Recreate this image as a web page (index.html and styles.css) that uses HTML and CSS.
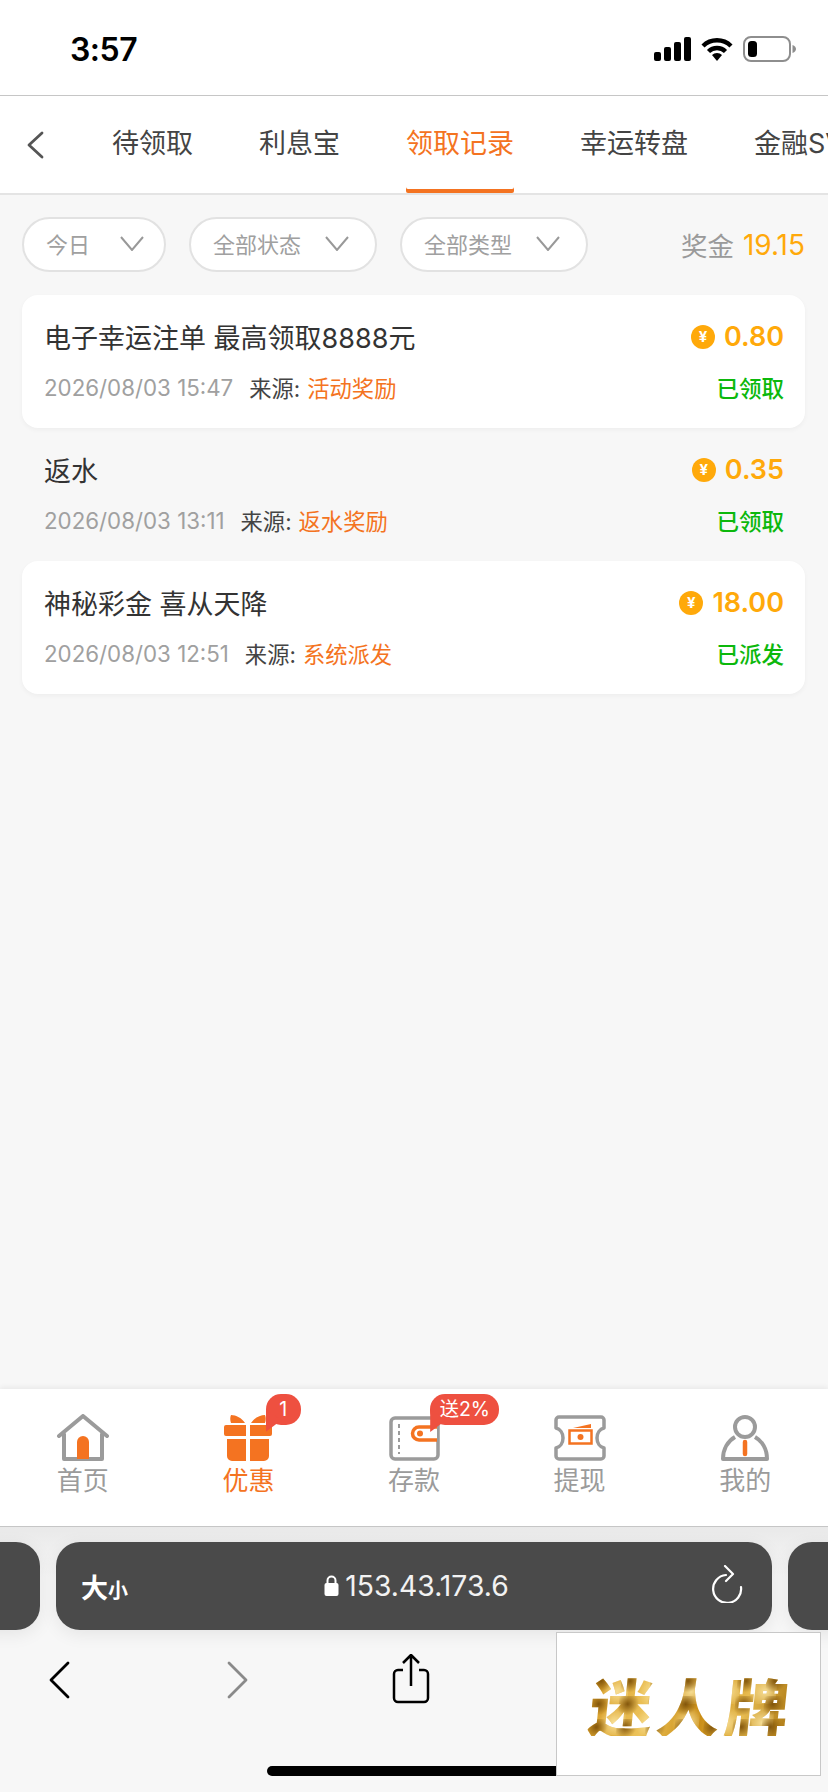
FILE: index.html
```html
<!DOCTYPE html>
<html lang="zh">
<head>
<meta charset="utf-8">
<title>领取记录</title>
<link rel="stylesheet" href="styles.css">
</head>
<body>
<div class="page">
  <header class="status">
    <span class="time">3:57</span>
    <div class="status-icons">
      <svg class="ic-signal" width="37" height="24" viewBox="0 0 37 24"><rect x="0" y="15" width="7" height="9" rx="2"/><rect x="10" y="10" width="7" height="14" rx="2"/><rect x="20" y="5" width="7" height="19" rx="2"/><rect x="30" y="0" width="7" height="24" rx="2"/></svg>
      <svg class="ic-wifi" width="32" height="24" viewBox="0 0 32 24"><path d="M16 24l-5-6a7 7 0 0 1 10 0z"/><path d="M2 9a20 20 0 0 1 28 0" fill="none" stroke="#000" stroke-width="4.4"/><path d="M7.5 14.5a12 12 0 0 1 17 0" fill="none" stroke="#000" stroke-width="4.4"/></svg>
      <svg class="ic-batt" width="54" height="26" viewBox="0 0 54 26"><rect x="1" y="1" width="46" height="24" rx="7" fill="#fff" stroke="#8e8e8e" stroke-width="2"/><rect x="5" y="5" width="9" height="16" rx="3.5" fill="#000"/><path d="M49.500 9v8c2.500-1 3.500-2.500 3.500-4s-1-3-3.500-4z" fill="#8e8e8e"/></svg>
    </div>
  </header>

  <nav class="tabs">
    <svg class="tab-back" width="18" height="28" viewBox="0 0 18 28"><path d="M16 2L3 14l13 12" fill="none" stroke="#555" stroke-width="2.800" stroke-linecap="round" stroke-linejoin="round"/></svg>
    <span class="tab">待领取</span>
    <span class="tab">利息宝</span>
    <span class="tab tab-active">领取记录</span>
    <span class="tab">幸运转盘</span>
    <span class="tab">金融SVIP</span>
  </nav>

  <main class="content">
    <div class="filters">
      <button class="filter f-short"><span>今日</span><svg width="24" height="15" viewBox="0 0 24 15"><path d="M1 1l11 13L23 1" fill="none" stroke="#999" stroke-width="2"/></svg></button>
      <button class="filter"><span>全部状态</span><svg width="24" height="15" viewBox="0 0 24 15"><path d="M1 1l11 13L23 1" fill="none" stroke="#999" stroke-width="2"/></svg></button>
      <button class="filter"><span>全部类型</span><svg width="24" height="15" viewBox="0 0 24 15"><path d="M1 1l11 13L23 1" fill="none" stroke="#999" stroke-width="2"/></svg></button>
      <div class="total"><span class="total-label">奖金</span><span class="total-num">19.15</span></div>
    </div>

    <section class="list">
      <article class="row card">
        <div class="row-line">
          <span class="row-title">电子幸运注单 最高领取8888元</span>
          <span class="amount"><i class="coin">¥</i>0.80</span>
        </div>
        <div class="row-line">
          <span class="meta"><span class="date">2026/08/03 15:47</span><span class="src">来源:</span><span class="src-val">活动奖励</span></span>
          <span class="state">已领取</span>
        </div>
      </article>
      <article class="row">
        <div class="row-line">
          <span class="row-title">返水</span>
          <span class="amount"><i class="coin">¥</i>0.35</span>
        </div>
        <div class="row-line">
          <span class="meta"><span class="date">2026/08/03 13:11</span><span class="src">来源:</span><span class="src-val">返水奖励</span></span>
          <span class="state">已领取</span>
        </div>
      </article>
      <article class="row card">
        <div class="row-line">
          <span class="row-title">神秘彩金 喜从天降</span>
          <span class="amount"><i class="coin">¥</i>18.00</span>
        </div>
        <div class="row-line">
          <span class="meta"><span class="date">2026/08/03 12:51</span><span class="src">来源:</span><span class="src-val">系统派发</span></span>
          <span class="state">已派发</span>
        </div>
      </article>
    </section>
  </main>

  <nav class="tabbar">
    <a class="tb-item">
      <svg width="54" height="48" viewBox="0 0 54 48"><path d="M8 20v25h38V20M3 22L27 2l24 20" fill="none" stroke="#9b9b9b" stroke-width="4" stroke-linecap="round" stroke-linejoin="round"/><path d="M21 45V28a6 6 0 0 1 12 0v17z" fill="#f47321"/></svg>
      <span>首页</span>
    </a>
    <a class="tb-item tb-active">
      <svg width="54" height="48" viewBox="0 0 54 48"><path d="M10 1c5 0 11 3 14 8H10c-1-3-1-6 0-8zM44 1c-5 0-11 3-14 8h14c1-3 1-6 0-8z" fill="#f47321"/><path d="M5 11h20v11H5a2 2 0 0 1-2-2v-7a2 2 0 0 1 2-2zM29 11h20a2 2 0 0 1 2 2v7a2 2 0 0 1-2 2H29zM6 25h19v22H11a5 5 0 0 1-5-5zM29 25h19v17a5 5 0 0 1-5 5H29z" fill="#f47321"/></svg>
      <span>优惠</span>
      <b class="badge badge-num">1</b>
    </a>
    <a class="tb-item">
      <svg width="54" height="48" viewBox="0 0 54 48"><rect x="4" y="4" width="47" height="41" rx="4" fill="none" stroke="#9b9b9b" stroke-width="3.500"/><path d="M12 10v30" stroke="#9b9b9b" stroke-width="2" stroke-dasharray="4 3"/><path d="M50 13H32a6.500 6.500 0 0 0 0 13h18" fill="#fff" stroke="#f47321" stroke-width="3.500"/><circle cx="33" cy="19.500" r="3" fill="#f47321"/></svg>
      <span>存款</span>
      <b class="badge badge-txt">送2%</b>
    </a>
    <a class="tb-item">
      <svg width="54" height="48" viewBox="0 0 54 48"><path d="M6 3h42a3 3 0 0 1 3 3v8c-4 1-7 5-7 10s3 9 7 10v8a3 3 0 0 1-3 3H6a3 3 0 0 1-3-3v-8c4-1 7-5 7-10s-3-9-7-10V6a3 3 0 0 1 3-3z" fill="none" stroke="#9b9b9b" stroke-width="3.500" stroke-linejoin="round"/><rect x="16.500" y="16.500" width="22" height="13" fill="none" stroke="#f47321" stroke-width="2.500"/><circle cx="27.500" cy="23" r="3" fill="#f47321"/><path d="M20 14l18-4v4z" fill="#f47321"/></svg>
      <span>提现</span>
    </a>
    <a class="tb-item">
      <svg width="54" height="48" viewBox="0 0 54 48"><circle cx="27" cy="13" r="10" fill="none" stroke="#9b9b9b" stroke-width="4"/><path d="M17 23C10 27 5 35 5 45h44c0-10-5-18-12-22" fill="none" stroke="#9b9b9b" stroke-width="4" stroke-linejoin="round"/><path d="M27 28v12" stroke="#f47321" stroke-width="4.500" stroke-linecap="round"/></svg>
      <span>我的</span>
    </a>
  </nav>

  <footer class="browser">
    <div class="url-row">
      <div class="pill-side"></div>
      <div class="pill">
        <span class="aa">大<small>小</small></span>
        <span class="url">
          <svg width="15" height="22" viewBox="0 0 15 22"><rect x="0.500" y="8" width="14" height="13" rx="2" fill="#fff"/><path d="M3.500 9V5.500a4 4 0 0 1 8 0V9" fill="none" stroke="#fff" stroke-width="2"/></svg>
          153.43.173.6
        </span>
        <span class="reload-wrap">
          <svg class="reload" width="32" height="38" viewBox="0 0 32 38"><path d="M15 10A14 14 0 1 0 30 22" fill="none" stroke="#fff" stroke-width="2.200" stroke-linecap="round"/><path d="M14 1l8 8-7 7" fill="none" stroke="#fff" stroke-width="2.200" stroke-linecap="round" stroke-linejoin="round"/></svg>
        </span>
      </div>
      <div class="pill-side"></div>
    </div>
    <div class="nav-row">
      <svg class="nav-ic" width="22" height="38" viewBox="0 0 22 38"><path d="M20 2L3 19l17 17" fill="none" stroke="#000" stroke-width="2.800" stroke-linecap="round" stroke-linejoin="round"/></svg>
      <svg class="nav-ic nav-fwd" width="22" height="38" viewBox="0 0 22 38"><path d="M2 2l17 17L2 36" fill="none" stroke="#8a8a8a" stroke-width="2.800" stroke-linecap="round" stroke-linejoin="round"/></svg>
      <svg class="nav-ic nav-share" width="38" height="50" viewBox="0 0 38 50"><path d="M11 16H6a4 4 0 0 0-4 4v24a4 4 0 0 0 4 4h26a4 4 0 0 0 4-4V20a4 4 0 0 0-4-4h-5" fill="none" stroke="#000" stroke-width="2.500"/><path d="M19 32V2M11 9l8-8 8 8" fill="none" stroke="#000" stroke-width="2.500" stroke-linejoin="round"/></svg>
    </div>
    <div class="home-ind"></div>
    <div class="logo-box"><span class="logo-text">迷人牌</span></div>
  </footer>
</div>
</body>
</html>
```

FILE: styles.css
```css
* { box-sizing: border-box; }
html, body { margin: 0; padding: 0; }
body {
  font-family: Inter, "Noto Sans CJK SC", sans-serif;
  background: #f7f7f7;
  color: #333;
}
.page {
  width: 828px;
  height: 1792px;
  display: flex;
  flex-direction: column;
  overflow: hidden;
}

/* status bar */
.status {
  height: 96px;
  flex: none;
  background: #fff;
  border-bottom: 1px solid #c6c6c6;
  display: flex;
  align-items: center;
  justify-content: space-between;
  padding: 2px 31px 0 70px;
}
.time { font-size: 32px; font-weight: 600; color: #000; letter-spacing: -0.5px; margin-top: 2px; }
.status-icons { display: flex; align-items: center; gap: 10px; }

/* tabs */
.tabs {
  height: 99px;
  flex: none;
  background: #fff;
  border-bottom: 2px solid #e4e4e4;
  display: flex;
  align-items: center;
  gap: 66px;
  padding-left: 26px;
  white-space: nowrap;
  overflow: hidden;
}
.tab-back { flex: none; margin-right: 2px; }
.tab {
  flex: none;
  font-size: 27px;
  line-height: 96px;
  color: #444;
  height: 97px;
}
.tab-active {
  color: #f47321;
  box-shadow: inset 0 -4px 0 #f47321;
  border-radius: 0 0 2px 2px;
}

/* filters */
.content { flex: 1; min-height: 0; padding: 22px 23px 0 22px; }
.filters { display: flex; align-items: center; height: 55px; gap: 23px; }
.filter {
  width: 188px;
  height: 55px;
  padding: 0 0 3px 22px;
  border: 2px solid #e2e2e2;
  border-radius: 28px;
  background: #fff;
  color: #a0a0a0;
  font-family: inherit;
  font-size: 22px;
  display: flex;
  align-items: center;
  gap: 24px;
}
.f-short { width: 144px; gap: 30px; }
.total { margin-left: auto; display: flex; align-items: center; gap: 9px; }
.total-label { font-size: 26.500px; color: #9a9a9a; }
.total-num { font-size: 28px; color: #ffa90a; }

/* list */
.list { margin-top: 23px; }
.row {
  height: 133px;
  padding: 20px 21px 0 22px;
  display: flex;
  flex-direction: column;
  gap: 9px;
  border-radius: 16px;
}
.card { background: #fff; box-shadow: 0 2px 5px rgba(0, 0, 0, 0.04); }
.row-line {
  height: 42px;
  display: flex;
  align-items: center;
  justify-content: space-between;
}
.row-title { font-size: 27px; color: #333; }
.amount {
  display: flex;
  align-items: center;
  gap: 9px;
  padding-top: 1px;
  font-size: 27px;
  font-weight: 600;
  color: #ffa90a;
}
.coin {
  width: 24px;
  height: 24px;
  border-radius: 50%;
  background: #ffa90a;
  color: #fff;
  font-size: 15px;
  font-weight: 700;
  font-style: normal;
  display: flex;
  align-items: center;
  justify-content: center;
}
.meta { display: flex; align-items: center; font-size: 22.300px; }
.date { color: #a0a0a0; margin-right: 16px; }
.src { color: #444; margin-right: 7px; }
.src-val { color: #f47321; }
.state { font-size: 22.500px; font-weight: 500; color: #0cb80c; }

/* bottom tab bar */
.tabbar {
  height: 138px;
  flex: none;
  background: #fff;
  border-bottom: 1px solid #c6c6c6;
  box-shadow: 0 -2px 5px rgba(0, 0, 0, 0.06);
  display: flex;
  padding-top: 25px;
  position: relative;
}
.tb-item {
  flex: 1;
  position: relative;
  display: flex;
  flex-direction: column;
  align-items: center;
  color: #9b9b9b;
  font-size: 26px;
  line-height: 38px;
}
.tb-item svg { display: block; }
.tb-active { color: #f47321; }
.badge {
  position: absolute;
  top: -20px;
  height: 31px;
  background: #ee5040;
  color: #fff;
  font-size: 19.500px;
  font-weight: 400;
  line-height: 31px;
  text-align: center;
  border-radius: 15px;
}
.badge::after {
  content: "";
  position: absolute;
  left: 0;
  top: 16px;
  width: 16px;
  height: 22px;
  background: #ee5040;
  clip-path: polygon(0 0, 100% 45%, 0 100%);
}
.badge-num { left: 100px; width: 35px; }
.badge-txt { left: 99px; width: 69px; }

/* browser chrome */
.browser {
  height: 265px;
  flex: none;
  position: relative;
  background: linear-gradient(#e9e9e9 0, #f7f7f7 50px, #f7f7f7 100%);
}
.url-row {
  display: flex;
  gap: 16px;
  margin: 15px -42px 0;
  height: 88px;
}
.pill, .pill-side {
  background: #4a4a4a;
  border-radius: 24px;
  box-shadow: 0 4px 18px rgba(0, 0, 0, 0.08);
}
.pill-side { flex: 1; }
.pill {
  width: 716px;
  flex: none;
  display: flex;
  align-items: center;
  padding: 0 29px 0 25px;
  color: #fff;
}
.aa { flex: 1; font-size: 27px; font-weight: 600; }
.aa small { font-size: 20px; font-weight: 600; }
.url { display: flex; align-items: center; gap: 6px; font-size: 28.300px; color: #f2f2f2; margin-left: 9px; }
.reload-wrap { flex: 1; display: flex; justify-content: flex-end; }
.reload { margin-top: -4px; }
.nav-row {
  display: flex;
  align-items: flex-start;
  padding: 31px 0 0 48px;
}
.nav-fwd { margin-left: 157px; }
.nav-share { margin: -7px 0 0 143px; }
.home-ind {
  position: absolute;
  left: 267px;
  top: 239px;
  width: 294px;
  height: 10px;
  border-radius: 5px;
  background: #000;
}
.logo-box {
  position: absolute;
  left: 556px;
  top: 105px;
  width: 265px;
  height: 144px;
  background: #fff;
  border: 1px solid #c8c8c8;
  display: flex;
  align-items: center;
  justify-content: center;
}
.logo-text {
  font-family: "Noto Sans CJK SC", sans-serif;
  font-size: 63px;
  font-weight: 900;
  line-height: 1;
  letter-spacing: 5px;
  margin-left: 6px;
  transform: skewX(-6deg);
  background:
    radial-gradient(circle at 30% 35%, rgba(120, 76, 6, 0.9) 0, rgba(120, 76, 6, 0) 45%) 0 0 / 29px 23px,
    radial-gradient(circle at 70% 60%, rgba(250, 228, 160, 0.9) 0, rgba(250, 228, 160, 0) 50%) 0 0 / 37px 31px,
    linear-gradient(100deg, #d69a22, #edc45c 30%, #c98c14 55%, #e7bb50 75%, #a8730e);
  -webkit-background-clip: text;
  background-clip: text;
  color: transparent;
}
```
